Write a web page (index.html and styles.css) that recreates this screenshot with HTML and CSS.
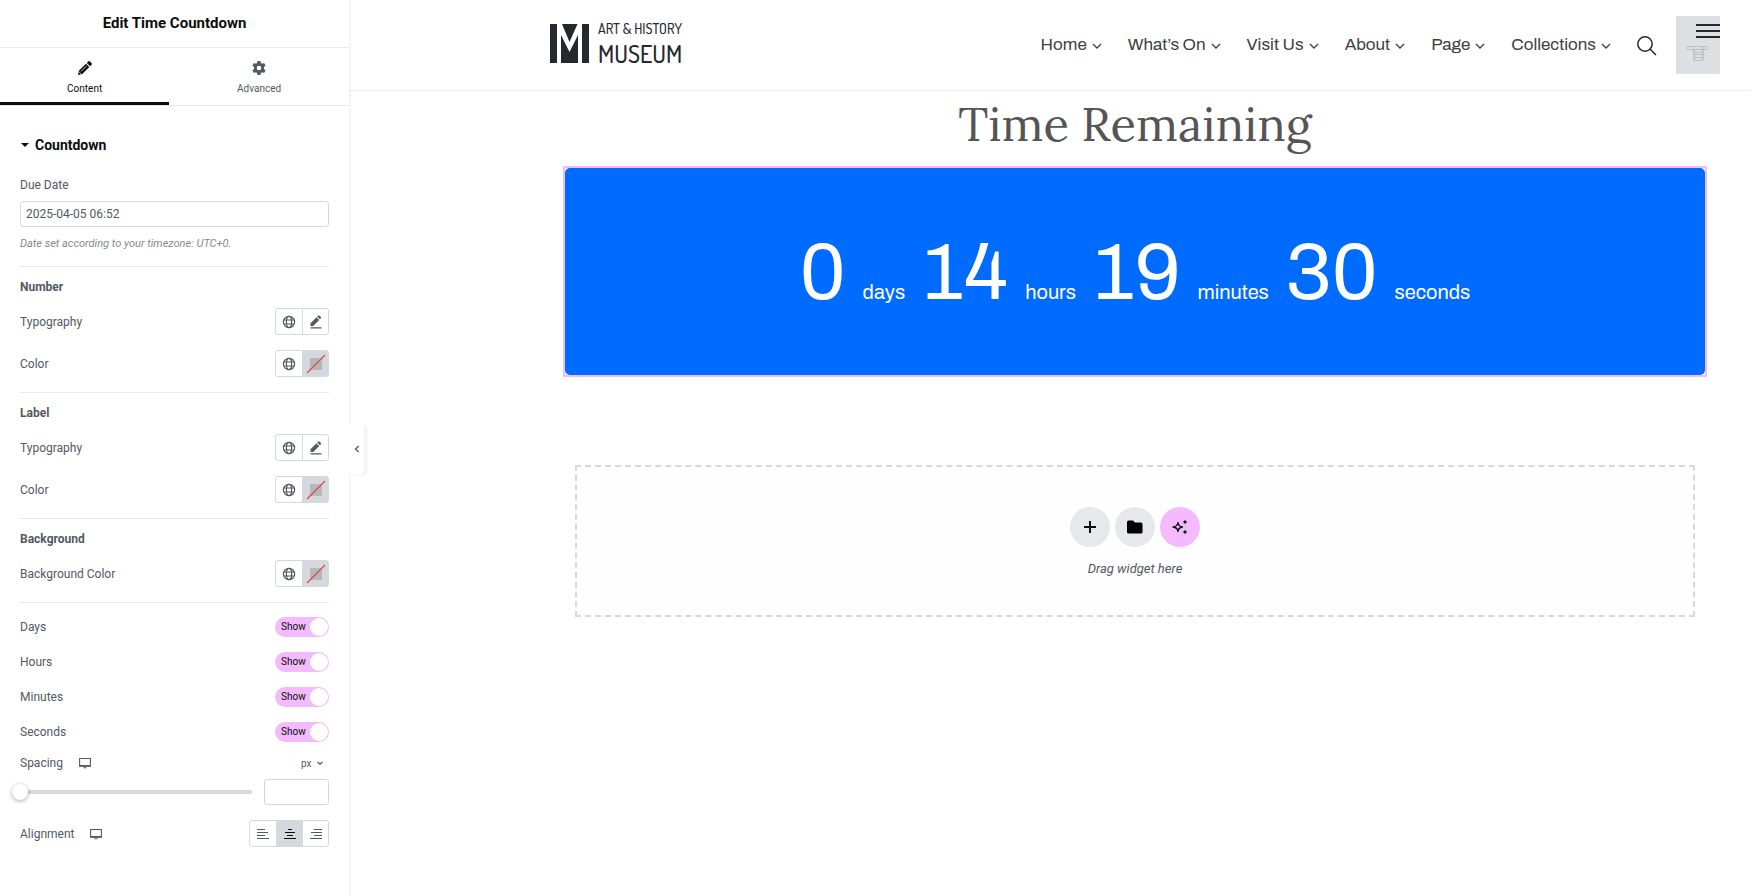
FILE: index.html
```html
<!DOCTYPE html>
<html lang="en">
<head>
    <meta charset="UTF-8">
    <meta name="viewport" content="width=device-width, initial-scale=1.0">
    <title>Edit Time Countdown</title>
    <link rel="stylesheet" href="styles.css">
</head>
<body>

<!-- Shared icons -->
<svg class="sprite" aria-hidden="true">
    <symbol id="globe" viewBox="0 0 14 14">
        <g fill="none" stroke="currentColor" stroke-width="1.2">
            <circle cx="7" cy="7" r="5.6"/>
            <ellipse cx="7" cy="7" rx="2.6" ry="5.6"/>
            <path d="M1.9 5h10.2M1.9 9h10.2"/>
        </g>
    </symbol>
    <symbol id="edit" viewBox="0 0 14 14">
        <path fill="currentColor" d="M1.500 11V8.300L7.500 2.300l2.700 2.700L4.200 11zM8.200 1.600l1-1q.6-.4 1.200 0l1.500 1.500q.4.600 0 1.200l-1 1zM1.500 12.200h11v1.200h-11z"/>
    </symbol>
    <symbol id="empty" viewBox="0 0 20 20">
        <rect x="4" y="4" width="12" height="12" rx="1" fill="#b3b8bb"/>
        <path d="M1 19L19 1" stroke="#e2494c" stroke-width="1.3"/>
    </symbol>
    <symbol id="desktop" viewBox="0 0 14 14">
        <path fill="none" stroke="currentColor" stroke-width="1.1" d="M1.6 2.5h10.8v7.6H1.6z"/>
        <path fill="currentColor" d="M1.5 9h11v1.5h-11zM5.5 11.2h3v1.1h-3z"/>
    </symbol>
    <symbol id="down" viewBox="0 0 10 10">
        <path fill="none" stroke="currentColor" stroke-width="1.3" d="M1 3l4 4 4-4"/>
    </symbol>
</svg>

<aside class="panel">
    <h2 class="panel-title">Edit Time Countdown</h2>

    <div class="tabs">
        <button type="button" class="tab tab-active">
            <svg width="14" height="14" viewBox="0 0 14 14"><path fill="currentColor" d="M0 14l.9-4.2L8 2.7 11.3 6l-7.1 7.1zM8.8 1.9L10.2.5q.9-.8 1.8 0L13.5 2q.8.9 0 1.8l-1.4 1.4z"/><path d="M3 10.5l5.6-5.6M1.2 11l1.800 1.800" stroke="#fff" stroke-width=".8"/></svg>
            Content
        </button>
        <button type="button" class="tab">
            <svg width="14" height="14" viewBox="0 0 14 14"><path fill="currentColor" fill-rule="evenodd" d="M5.5 0h3l.4 2 1.2.7 2-.7 1.5 2.6L12 6v2l1.6 1.4-1.5 2.6-2-.7-1.2.7-.4 2h-3l-.4-2-1.2-.7-2 .7L.4 9.4 2 8V6L.4 4.6 1.9 2l2 .7L5.1 2zM7 4.7a2.3 2.3 0 1 0 0 4.6 2.3 2.3 0 0 0 0-4.6z"/></svg>
            Advanced
        </button>
    </div>

    <form class="controls">
        <h3 class="section-title"><span class="caret"></span>Countdown</h3>

        <div class="field">
            <label for="dueDate">Due Date</label>
            <input type="text" id="dueDate" class="text-input" value="2025-04-05 06:52">
            <p class="hint">Date set according to your timezone: UTC+0.</p>
        </div>

        <div class="group">
            <h4>Number</h4>
            <div class="row">
                <span>Typography</span>
                <div class="btn-group">
                    <button type="button" aria-label="Global typography"><svg width="14" height="14"><use href="#globe"/></svg></button>
                    <button type="button" aria-label="Edit typography"><svg width="14" height="14"><use href="#edit"/></svg></button>
                </div>
            </div>
            <div class="row">
                <span>Color</span>
                <div class="btn-group">
                    <button type="button" aria-label="Global color"><svg width="14" height="14"><use href="#globe"/></svg></button>
                    <button type="button" class="on" aria-label="Pick color"><svg width="20" height="20"><use href="#empty"/></svg></button>
                </div>
            </div>
        </div>

        <div class="group">
            <h4>Label</h4>
            <div class="row">
                <span>Typography</span>
                <div class="btn-group">
                    <button type="button" aria-label="Global typography"><svg width="14" height="14"><use href="#globe"/></svg></button>
                    <button type="button" aria-label="Edit typography"><svg width="14" height="14"><use href="#edit"/></svg></button>
                </div>
            </div>
            <div class="row">
                <span>Color</span>
                <div class="btn-group">
                    <button type="button" aria-label="Global color"><svg width="14" height="14"><use href="#globe"/></svg></button>
                    <button type="button" class="on" aria-label="Pick color"><svg width="20" height="20"><use href="#empty"/></svg></button>
                </div>
            </div>
        </div>

        <div class="group">
            <h4>Background</h4>
            <div class="row">
                <span>Background Color</span>
                <div class="btn-group">
                    <button type="button" aria-label="Global color"><svg width="14" height="14"><use href="#globe"/></svg></button>
                    <button type="button" class="on" aria-label="Pick color"><svg width="20" height="20"><use href="#empty"/></svg></button>
                </div>
            </div>
        </div>

        <div class="group">
            <div class="row">
                <label for="days">Days</label>
                <div class="switch"><span>Show</span><input type="checkbox" id="days" checked></div>
            </div>
            <div class="row">
                <label for="hours">Hours</label>
                <div class="switch"><span>Show</span><input type="checkbox" id="hours" checked></div>
            </div>
            <div class="row">
                <label for="minutes">Minutes</label>
                <div class="switch"><span>Show</span><input type="checkbox" id="minutes" checked></div>
            </div>
            <div class="row">
                <label for="seconds">Seconds</label>
                <div class="switch"><span>Show</span><input type="checkbox" id="seconds" checked></div>
            </div>
            <div class="field">
                <div class="row">
                    <div class="name"><label for="spacing">Spacing</label><svg width="14" height="14"><use href="#desktop"/></svg></div>
                    <div class="unit">
                        <select aria-label="Unit"><option>px</option></select>
                        <svg width="6" height="6" viewBox="0 0 6 6"><path fill="none" stroke="currentColor" stroke-width="1.200" d="M.5 2L3 4.200 5.500 2"/></svg>
                    </div>
                </div>
                <div class="slider">
                    <input type="range" id="spacing" min="0" max="100" value="0">
                    <input type="text" class="text-input" aria-label="Spacing value">
                </div>
            </div>
            <div class="row">
                <div class="name"><span>Alignment</span><svg width="14" height="14"><use href="#desktop"/></svg></div>
                <div class="btn-group">
                    <button type="button" aria-label="Left"><svg width="12" height="10" viewBox="0 0 12 10"><path stroke="currentColor" d="M0 .5h8M0 3.5h11M0 6.5h8M0 9.5h12"/></svg></button>
                    <button type="button" class="on" aria-label="Center"><svg width="12" height="10" viewBox="0 0 12 10"><path stroke="currentColor" d="M4 .5h4M1 3.5h10M3 6.5h6M0 9.5h12"/></svg></button>
                    <button type="button" aria-label="Right"><svg width="12" height="10" viewBox="0 0 12 10"><path stroke="currentColor" d="M4 .5h8M1 3.5h11M4 6.5h8M0 9.5h12"/></svg></button>
                </div>
            </div>
        </div>
    </form>

    <button type="button" class="collapse" aria-label="Hide panel">
        <svg width="6" height="8" viewBox="0 0 6 8"><path fill="none" stroke="currentColor" stroke-width="1.3" d="M4.7 1L1.5 4l3.2 3"/></svg>
    </button>
</aside>

<main class="preview">
    <header class="site-header">
        <a href="#" class="logo">
            <svg width="39" height="39" viewBox="0 0 39 39"><path fill="#27282d" d="M0 0h7v39H0zM32 0h7v39h-7zM11 11l8.500 17L28 11v28H11zM12 0h15.500L19.500 18z"/></svg>
            <span class="logo-text">
                <span class="logo-small">ART &amp; HISTORY</span>
                <span class="logo-big">MUSEUM</span>
            </span>
        </a>
        <nav class="nav">
            <a href="#">Home<svg width="10" height="10"><use href="#down"/></svg></a>
            <a href="#">What’s On<svg width="10" height="10"><use href="#down"/></svg></a>
            <a href="#">Visit Us<svg width="10" height="10"><use href="#down"/></svg></a>
            <a href="#">About<svg width="10" height="10"><use href="#down"/></svg></a>
            <a href="#">Page<svg width="10" height="10"><use href="#down"/></svg></a>
            <a href="#">Collections<svg width="10" height="10"><use href="#down"/></svg></a>
        </nav>
        <button type="button" class="search" aria-label="Search">
            <svg width="20" height="20" viewBox="0 0 20 20"><g fill="none" stroke="#27282d" stroke-width="1.5"><circle cx="8" cy="8" r="7.200"/><path d="M13 13l6 6"/></g></svg>
        </button>
        <button type="button" class="menu" aria-label="Menu">
            <svg width="44" height="58" viewBox="0 0 44 58">
                <path fill="#27282d" d="M20 8h24v2H20zM20 14h24v2H20zM20 20h24v2H20z"/>
                <g fill="none" stroke="#bcc2c8"><path d="M11.500 30.500h20v3h-20zM17.500 30.500h10v14h-10zM19 36.500h7M19 38.500h7M19 41.500h7M19 33.500v11M26 30v14"/></g>
            </svg>
        </button>
    </header>

    <div class="content">
        <h1>Time Remaining</h1>
        <div class="widget">
            <div class="countdown">
                <span class="number">0</span><span class="unit-label">days</span>
                <span class="number">14</span><span class="unit-label">hours</span>
                <span class="number">19</span><span class="unit-label">minutes</span>
                <span class="number">30</span><span class="unit-label">seconds</span>
            </div>
        </div>

        <div class="drop-area">
            <div class="drop-buttons">
                <button type="button" aria-label="Add container"><svg width="12" height="12" viewBox="0 0 12 12"><path stroke="#0c0d0e" stroke-width="2" d="M6 0v12M0 6h12"/></svg></button>
                <button type="button" aria-label="Add template"><svg width="16" height="14" viewBox="0 0 16 14"><path fill="#000" d="M0 2Q0 .5 1.500.500H6l2 2h6q1.500 0 1.500 1.500v8q0 1.500-1.500 1.500H1.500Q0 13.500 0 12z"/></svg></button>
                <button type="button" class="ai" aria-label="Build with AI"><svg width="16" height="16" viewBox="0 0 16 16"><path fill="none" stroke="#0c0d0e" stroke-width="1.300" stroke-linejoin="round" d="M6 3.500Q6.500 7.500 10.500 8 6.500 8.500 6 12.500 5.500 8.500 1 8 5.500 7.500 6 3.500z"/><path fill="#0c0d0e" d="M13 .5l.8 1.700 1.700.8-1.700.8L13 5.500l-.8-1.700-1.700-.8 1.700-.8zM13 10.500l.8 1.700 1.700.8-1.700.8-.8 1.700-.8-1.700-1.700-.8 1.700-.8z"/></svg></button>
            </div>
            <p>Drag widget here</p>
        </div>
    </div>
</main>

</body>
</html>
```
FILE: styles.css
```css
* {
    box-sizing: border-box;
}
body {
    margin: 0;
    display: flex;
    min-height: 100vh;
    font-family: Roboto, Arial, sans-serif;
    font-size: 12px;
    line-height: 12px;
    color: #515962;
    background-color: #fff;
}
h1, h2, h3, h4, p {
    margin: 0;
}
button, input, select {
    font-family: inherit;
    font-size: inherit;
    color: inherit;
}
button {
    padding: 0;
    border: none;
    background: none;
    cursor: pointer;
}
svg {
    display: block;
    flex-shrink: 0;
}
.sprite {
    position: absolute;
    width: 0;
    height: 0;
}

/* Left panel */
.panel {
    position: relative;
    flex: 0 0 349px;
    background-color: #fff;
    box-shadow: 0 0 4px rgba(0, 0, 0, 0.12);
}
.panel-title {
    padding: 13px 0 14px;
    border-bottom: 1px solid #e6e8ea;
    text-align: center;
    font-size: 15px;
    font-weight: bold;
    line-height: 20px;
    color: #0c0d0e;
}
.tabs {
    display: flex;
    height: 58px;
    border-bottom: 1px solid #e6e8ea;
}
.tab {
    flex: 1 1 51%;
    display: flex;
    flex-direction: column;
    align-items: center;
    gap: 8px;
    padding-top: 13px;
    border-bottom: 3px solid transparent;
    font-size: 10px;
    line-height: 12px;
}
.tab-active {
    flex-basis: 48%;
    border-color: #0c0d0e;
    color: #0c0d0e;
}
.controls {
    padding: 29px 20px;
}
.section-title {
    display: flex;
    align-items: center;
    margin-bottom: 24px;
    font-size: 14px;
    line-height: 20px;
    color: #0c0d0e;
}
.caret {
    margin: 0 6px 0 1px;
    border: 4px solid transparent;
    border-top-color: #0c0d0e;
    border-bottom: none;
}
.field {
    display: flex;
    flex-direction: column;
    gap: 10px;
}
.text-input {
    width: 100%;
    height: 26px;
    padding: 0 5px;
    border: 1px solid #d5d8dc;
    border-radius: 3px;
    background-color: #fff;
}
.hint {
    font-size: 11px;
    font-style: italic;
    line-height: 14px;
    color: #818a96;
}
.group {
    display: flex;
    flex-direction: column;
    gap: 15px;
    margin-top: 15px;
    padding-top: 14px;
    border-top: 1px solid #e6e8ea;
}
.group h4 {
    font-size: 12px;
}
.row {
    display: flex;
    justify-content: space-between;
    align-items: center;
}
.name {
    display: flex;
    align-items: center;
    gap: 15px;
}
.name svg {
    margin: -1px 0;
}
.btn-group {
    display: flex;
    height: 27px;
    border: 1px solid #d5d8dc;
    border-radius: 3px;
}
.btn-group button {
    width: 26px;
    display: flex;
    align-items: center;
    justify-content: center;
}
.btn-group button + button {
    border-left: 1px solid #d5d8dc;
}
.btn-group .on {
    background-color: #d5d8dc;
    color: #0c0d0e;
}
.switch {
    display: flex;
    align-items: center;
    justify-content: space-between;
    width: 54px;
    height: 20px;
    padding: 1px 1px 1px 6px;
    border-radius: 10px;
    background-color: #f3bafd;
    font-size: 10px;
    color: #0c0d0e;
}
.switch input {
    appearance: none;
    width: 18px;
    height: 18px;
    margin: 0;
    border-radius: 50%;
    background-color: #fff;
}
.unit {
    display: flex;
    align-items: center;
    gap: 5px;
    padding-right: 6px;
}
.unit select {
    appearance: none;
    height: 12px;
    padding: 0;
    border: none;
    background: none;
    font-size: 10px;
}
.slider {
    display: flex;
    align-items: center;
    gap: 12px;
}
.slider input[type="range"] {
    appearance: none;
    flex: 1;
    min-width: 0;
    height: 16px;
    margin: 0 0 0 -8px;
    background: none;
}
.slider input::-webkit-slider-runnable-track {
    height: 4px;
    border-radius: 2px;
    background-color: #d5d8dc;
}
.slider input::-webkit-slider-thumb {
    appearance: none;
    width: 16px;
    height: 16px;
    margin-top: -6px;
    border-radius: 50%;
    background-color: #fff;
    box-shadow: 0 1px 4px rgba(0, 0, 0, 0.35);
}
.slider .text-input {
    width: 65px;
}
.collapse {
    position: absolute;
    top: 424px;
    left: 100%;
    width: 15px;
    height: 50px;
    display: flex;
    align-items: center;
    justify-content: center;
    border-radius: 0 3px 3px 0;
    background-color: #fff;
    box-shadow: 3px 1px 3px rgba(0, 0, 0, 0.06);
}

/* Page preview */
.preview {
    flex: 1;
    min-width: 0;
}
.site-header {
    display: flex;
    align-items: center;
    height: 91px;
    padding: 0 31px 0 201px;
    border-bottom: 1px solid #ebebeb;
}
.logo {
    display: flex;
    align-items: center;
    gap: 9px;
    margin-right: auto;
    padding-bottom: 3px;
    color: #27282d;
    text-decoration: none;
    white-space: nowrap;
}
.logo-text {
    display: flex;
    flex-direction: column;
    gap: 6px;
    font-family: Dosis, Roboto, sans-serif;
    font-weight: 500;
}
.logo-small {
    font-size: 14px;
    line-height: 14px;
}
.logo-big {
    font-size: 24px;
    line-height: 24px;
}
.nav {
    display: flex;
    gap: 26px;
}
.nav a {
    display: flex;
    align-items: center;
    gap: 5px;
    font-family: Archivo, "Liberation Sans", Arial, sans-serif;
    font-size: 17px;
    line-height: 20px;
    color: #404040;
    text-decoration: none;
    white-space: nowrap;
}
.nav svg {
    margin-top: 2px;
}
.search {
    margin: 2px 19px 0 26px;
}
.menu {
    background-color: #dddfe3;
}
.content {
    max-width: 1402px;
    padding: 4px 46px 0 216px;
}
.content h1 {
    margin-bottom: 15px;
    text-align: center;
    font-family: Lora, "Liberation Serif", serif;
    font-size: 47px;
    font-weight: normal;
    line-height: 58px;
    color: #555;
}
.widget {
    outline: 2px solid #f3bafd;
}
.countdown {
    display: flex;
    justify-content: center;
    align-items: baseline;
    gap: 17px;
    padding: 65px 0 62px;
    border-radius: 5px;
    background-color: #006bff;
    font-family: Archivo, "Liberation Sans", Arial, sans-serif;
    color: #fff;
}
.number {
    font-size: 80px;
    line-height: 80px;
}
.unit-label {
    font-size: 20px;
    line-height: 24px;
}
.drop-area {
    margin: 90px 10px 0;
    padding: 40px 0 39px;
    border: 2px dashed #d5d8dc;
    text-align: center;
    background-color: #fefefe;
}
.drop-buttons {
    display: flex;
    justify-content: center;
    gap: 5px;
    margin-bottom: 14px;
}
.drop-buttons button {
    width: 40px;
    height: 40px;
    display: flex;
    align-items: center;
    justify-content: center;
    border-radius: 50%;
    background-color: #e6e8ea;
}
.drop-buttons .ai {
    background-color: #f3bafd;
}
.drop-area p {
    font-size: 13px;
    font-style: italic;
    line-height: 15px;
}
```
